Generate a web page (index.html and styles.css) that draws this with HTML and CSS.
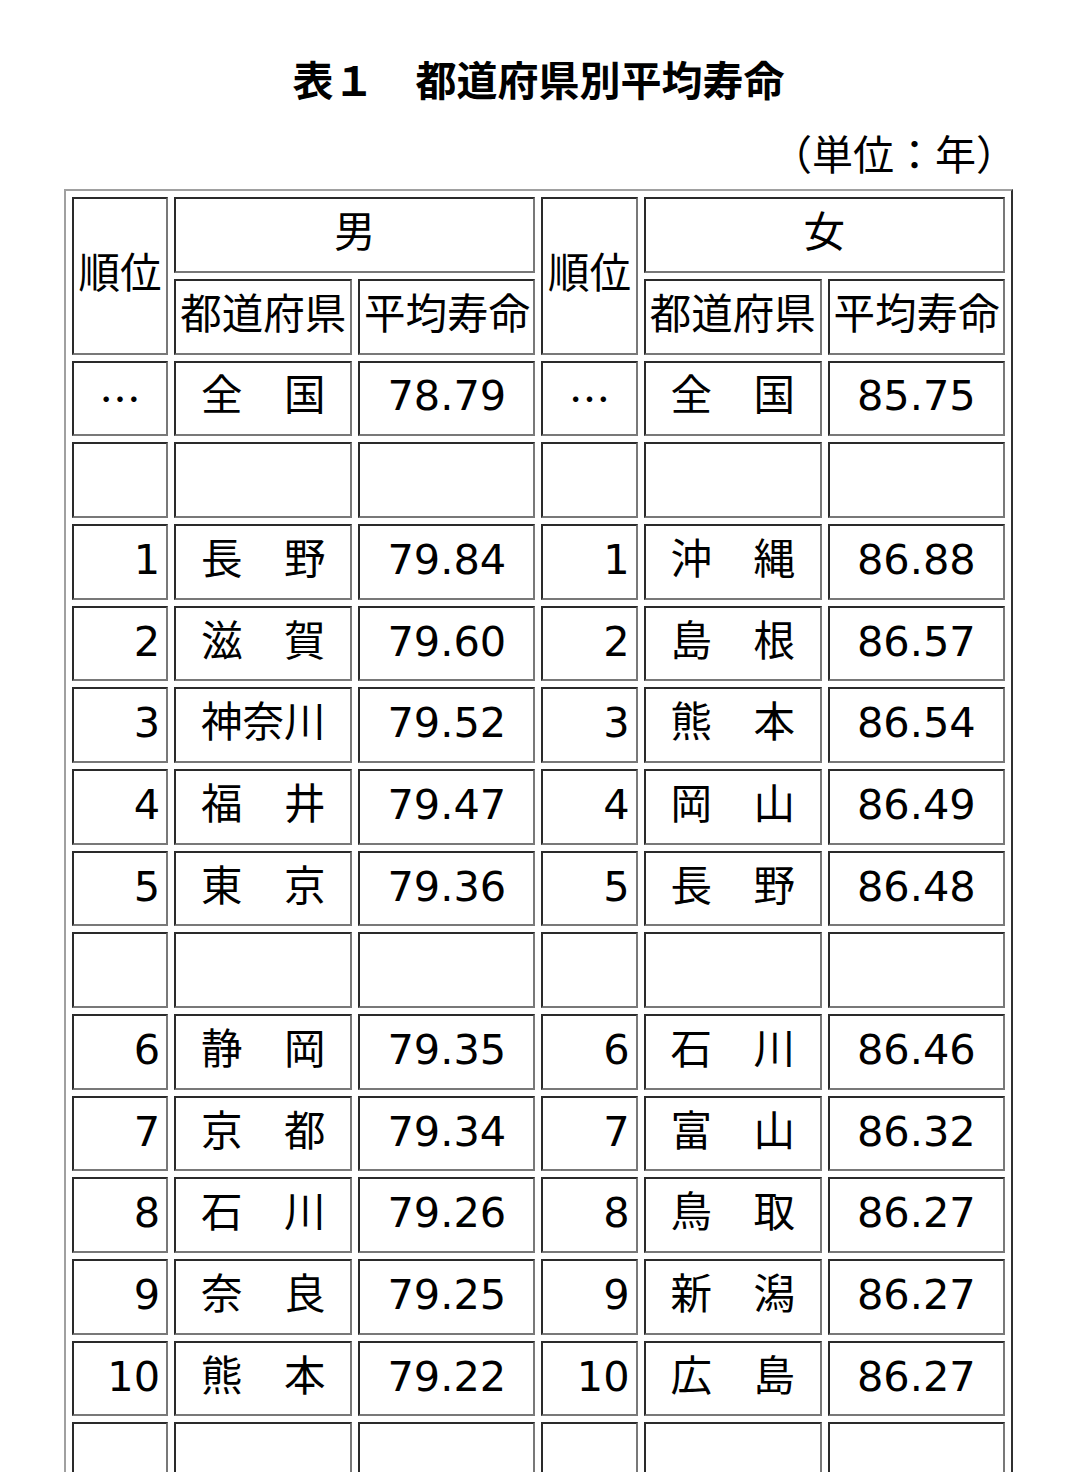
FILE: index.html
```html
<!DOCTYPE html>
<html lang="ja">
<head>
<meta charset="utf-8">
<title>表１　都道府県別平均寿命</title>
<link rel="stylesheet" href="styles.css">
</head>
<body>
<div class="page">
  <h1 class="title">表１　都道府県別平均寿命</h1>
  <p class="unit">（単位：年）</p>
  <table class="life">
    <colgroup>
      <col class="c-rank">
      <col class="c-pref">
      <col class="c-val">
      <col class="c-rank">
      <col class="c-pref">
      <col class="c-val">
    </colgroup>
    <thead>
      <tr>
        <th rowspan="2" class="jp">順位</th>
        <th colspan="2" class="jp">男</th>
        <th rowspan="2" class="jp">順位</th>
        <th colspan="2" class="jp">女</th>
      </tr>
      <tr>
        <th class="jp">都道府県</th>
        <th class="jp">平均寿命</th>
        <th class="jp">都道府県</th>
        <th class="jp">平均寿命</th>
      </tr>
    </thead>
    <tbody>
      <tr>
        <td class="dots"><span class="jp">…</span></td><td class="jp name">全　国</td><td class="num">78.79</td>
        <td class="dots"><span class="jp">…</span></td><td class="jp name">全　国</td><td class="num">85.75</td>
      </tr>
      <tr class="blank"><td></td><td></td><td></td><td></td><td></td><td></td></tr>
      <tr>
        <td class="rank">1</td><td class="jp name">長　野</td><td class="num">79.84</td>
        <td class="rank">1</td><td class="jp name">沖　縄</td><td class="num">86.88</td>
      </tr>
      <tr>
        <td class="rank">2</td><td class="jp name">滋　賀</td><td class="num">79.60</td>
        <td class="rank">2</td><td class="jp name">島　根</td><td class="num">86.57</td>
      </tr>
      <tr>
        <td class="rank">3</td><td class="jp name">神奈川</td><td class="num">79.52</td>
        <td class="rank">3</td><td class="jp name">熊　本</td><td class="num">86.54</td>
      </tr>
      <tr>
        <td class="rank">4</td><td class="jp name">福　井</td><td class="num">79.47</td>
        <td class="rank">4</td><td class="jp name">岡　山</td><td class="num">86.49</td>
      </tr>
      <tr>
        <td class="rank">5</td><td class="jp name">東　京</td><td class="num">79.36</td>
        <td class="rank">5</td><td class="jp name">長　野</td><td class="num">86.48</td>
      </tr>
      <tr class="blank"><td></td><td></td><td></td><td></td><td></td><td></td></tr>
      <tr>
        <td class="rank">6</td><td class="jp name">静　岡</td><td class="num">79.35</td>
        <td class="rank">6</td><td class="jp name">石　川</td><td class="num">86.46</td>
      </tr>
      <tr>
        <td class="rank">7</td><td class="jp name">京　都</td><td class="num">79.34</td>
        <td class="rank">7</td><td class="jp name">富　山</td><td class="num">86.32</td>
      </tr>
      <tr>
        <td class="rank">8</td><td class="jp name">石　川</td><td class="num">79.26</td>
        <td class="rank">8</td><td class="jp name">鳥　取</td><td class="num">86.27</td>
      </tr>
      <tr>
        <td class="rank">9</td><td class="jp name">奈　良</td><td class="num">79.25</td>
        <td class="rank">9</td><td class="jp name">新　潟</td><td class="num">86.27</td>
      </tr>
      <tr>
        <td class="rank">10</td><td class="jp name">熊　本</td><td class="num">79.22</td>
        <td class="rank">10</td><td class="jp name">広　島</td><td class="num">86.27</td>
      </tr>
      <tr class="blank"><td></td><td></td><td></td><td></td><td></td><td></td></tr>
    </tbody>
  </table>
</div>
</body>
</html>
```
FILE: styles.css
```css
html, body {
  margin: 0;
  padding: 0;
  background: #ffffff;
  color: #000000;
}

html {
  overflow: hidden;
}

body {
  font-family: "DejaVu Sans", "Noto Sans CJK JP", sans-serif;
}

.page {
  width: 949px;
  margin-left: 64px;
}

.jp {
  font-family: "Noto Sans CJK JP", sans-serif;
}

.title {
  font-family: "Noto Sans CJK JP", sans-serif;
  font-size: 41px;
  font-weight: 700;
  line-height: 1.2;
  text-align: center;
  margin: 54px 0 0 0;
}

.unit {
  font-family: "Noto Sans CJK JP", sans-serif;
  font-size: 41px;
  line-height: 1.2;
  text-align: right;
  margin: 24.8px -4px 0 0;
}

.life {
  margin-top: 12px;
  table-layout: fixed;
  width: 949px;
  border-collapse: separate;
  border-spacing: 6px 6px;
  border: 2px solid;
  border-color: #a0a0a0 #303030 #303030 #a0a0a0;
  font-size: 41.5px;
}

.c-rank { width: 96px; }
.c-pref { width: 178px; }
.c-val { width: 177px; }

.life tr {
  height: 75.7px;
}

.life th,
.life td {
  border-style: solid;
  border-width: 2px;
  border-color: #2a2a2a #787878 #787878 #2a2a2a;
  padding: 0;
  line-height: 1.2;
  vertical-align: middle;
  white-space: nowrap;
  font-weight: 400;
}

.life th {
  text-align: center;
  padding-bottom: 10px;
}

.life td.name {
  text-align: center;
  padding-bottom: 10px;
}

.life td.num {
  text-align: center;
  padding-bottom: 4px;
}

.life td.rank {
  text-align: right;
  padding-right: 6px;
  padding-bottom: 4px;
}

.life td.dots {
  text-align: center;
  padding-top: 2px;
}
```
